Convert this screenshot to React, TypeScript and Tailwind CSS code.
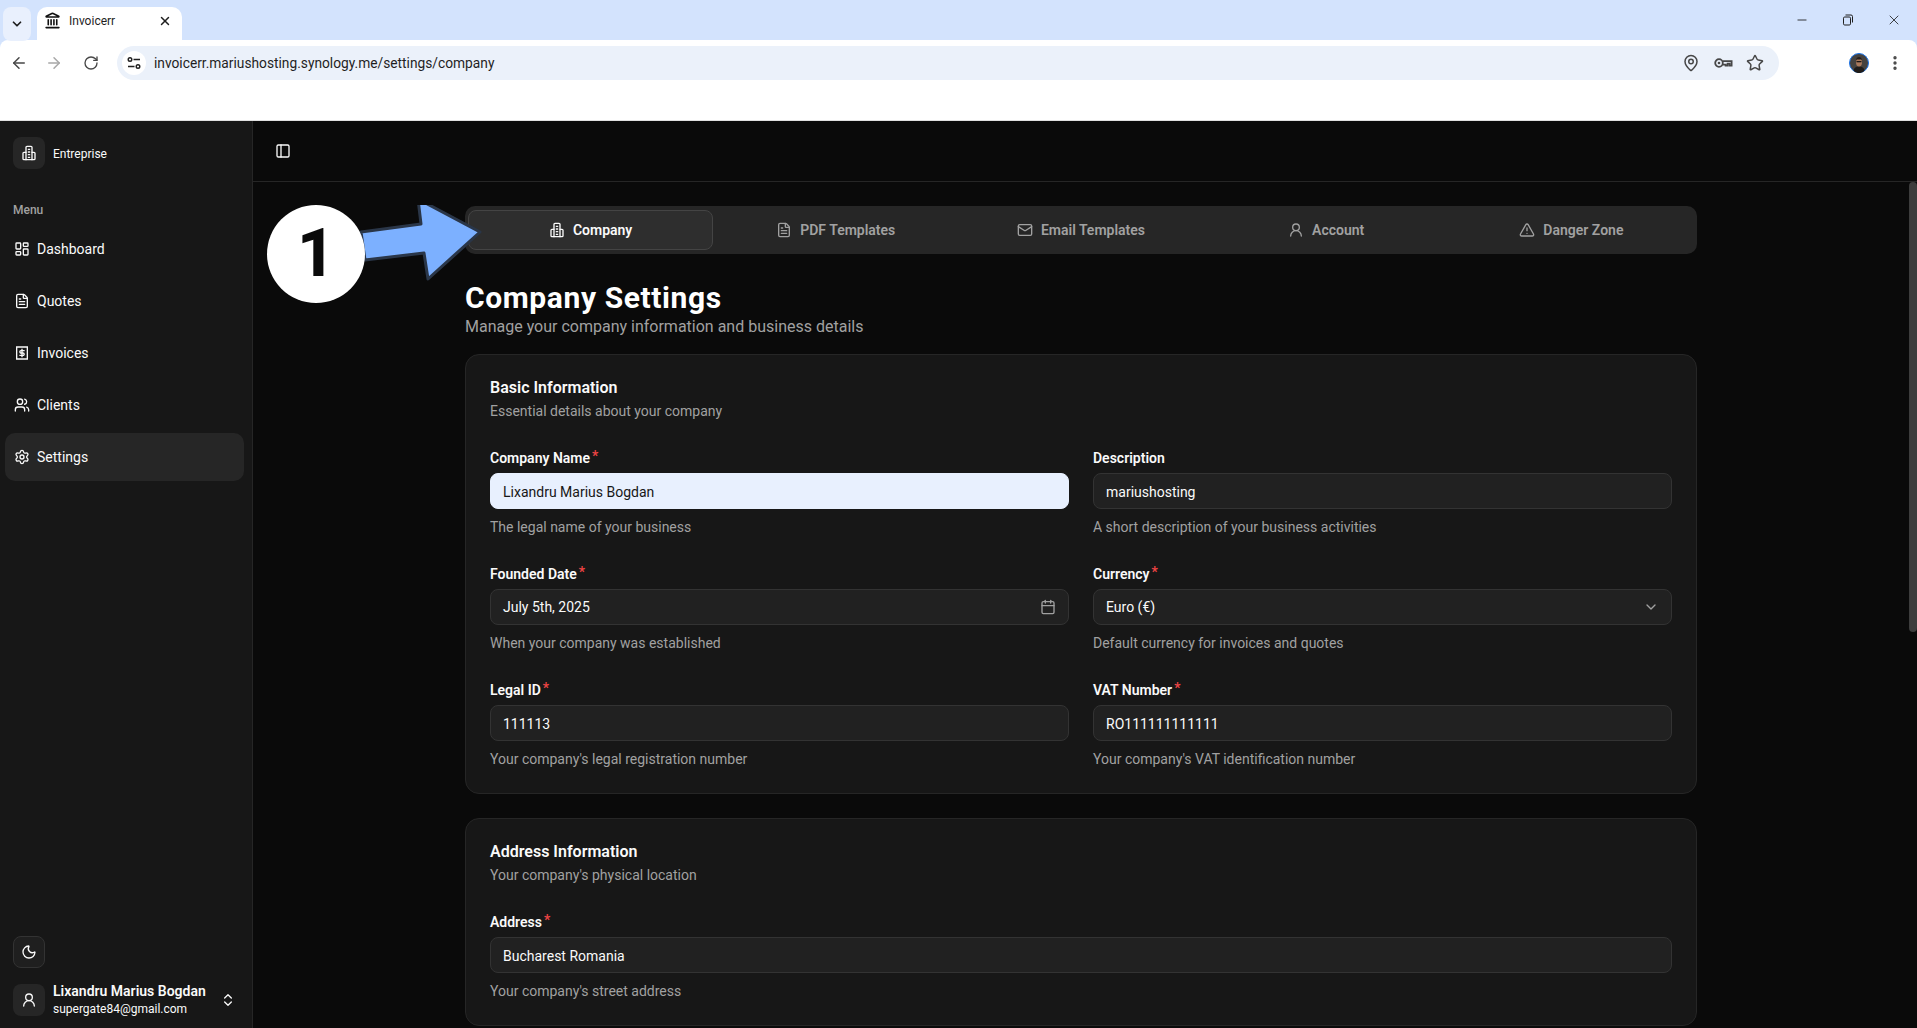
import { ArrowLeft, ArrowRight, Calendar, ChevronDown, ChevronsUpDown, FileText, Landmark, LayoutDashboard, Mail, MapPin, Minus, Moon, MoreVertical, PanelLeft, RotateCw, Settings, Star, TriangleAlert, UserRound, Users, X } from 'lucide-react'

function BuildingIcon({ size = 16 }: { size?: number }) {
  return (
    <svg width={size} height={size} viewBox="0 0 24 24" fill="none" stroke="currentColor" strokeWidth="2" strokeLinecap="round" strokeLinejoin="round">
      <path d="M7.500 22V3.500A1.500 1.500 0 0 1 9 2h6a1.500 1.500 0 0 1 1.500 1.500V22" />
      <path d="M7.500 11H4.500A1.500 1.500 0 0 0 3 12.500V20.500A1.500 1.500 0 0 0 4.500 22h15a1.500 1.500 0 0 0 1.500-1.500V12.500A1.500 1.500 0 0 0 19.500 11h-3" />
      <path d="M11 6.500h2M11 10.500h2M11 14.500h2M11 18.500h2" />
    </svg>
  )
}

function InvoiceIcon({ size = 16 }: { size?: number }) {
  return (
    <svg width={size} height={size} viewBox="0 0 24 24" fill="none" stroke="currentColor" strokeWidth="2" strokeLinecap="square">
      <rect x="4" y="3" width="16" height="18" strokeDasharray="2 1" />
      <path d="M15 8.500h-4.500a1.750 1.750 0 0 0 0 3.500h3a1.750 1.750 0 0 1 0 3.500H9M12 6.500v11" />
    </svg>
  )
}

function TuneIcon() {
  return (
    <svg width="16" height="16" viewBox="0 0 16 16" fill="none" stroke="#1f1f1f" strokeWidth="1.400">
      <circle cx="4" cy="4.500" r="1.800" />
      <path d="M7.500 4.500H14M2 11.500h6.500" />
      <circle cx="12" cy="11.500" r="1.800" />
    </svg>
  )
}

function KeyIcon() {
  return (
    <svg width="20" height="20" viewBox="0 0 20 20" fill="none" stroke="#474747" strokeWidth="1.800">
      <circle cx="6" cy="10" r="3.800" />
      <circle cx="6" cy="10" r="1.300" fill="#474747" stroke="none" />
      <path d="M9.800 8.200H18.600V12.600H16.600V10.600H14.600V12.600H12.600V11.600H9.800" />
    </svg>
  )
}

function RestoreIcon() {
  return (
    <svg width="12" height="12" viewBox="0 0 12 12" fill="none" stroke="#1f1f1f" strokeWidth="1">
      <rect x="1.500" y="3" width="7" height="8" rx="1.200" />
      <path d="M3.500 1h5.500a1.500 1.500 0 0 1 1.500 1.500v6" />
    </svg>
  )
}

function Avatar() {
  return (
    <svg width="20" height="20" viewBox="0 0 20 20">
      <circle cx="10" cy="10" r="9.500" fill="#45423f" stroke="#1a73e8" strokeWidth="1" />
      <path d="M4.500 18c.5-3.500 2.500-4.500 5.500-4.500s5 1 5.500 4.500a9 9 0 0 1-11 0z" fill="#1f1c1a" />
      <ellipse cx="10" cy="9" rx="3" ry="4.500" fill="#a9795c" />
      <path d="M7 7.500c0-2.500 1.500-3.500 3-3.500s3 1 3 3.500l-1-1h-4z" fill="#221d1a" />
      <rect x="7.500" y="8" width="5" height="1.300" fill="#1a1614" />
    </svg>
  )
}

function Browser() {
  return (
    <div className="bg-[#d3e3fd] shrink-0">
      <div className="h-10 flex items-start pl-[3px]">
        <div className="mt-[7px] w-7 h-[34px] rounded-lg bg-[#e9f0fd] flex items-center justify-center">
          <ChevronDown size={14} strokeWidth={3} className="text-[#1f1f1f]" />
        </div>
        <div className="ml-[6px] mt-[7px] w-[145px] h-[33px] rounded-t-[10px] bg-white flex items-start pt-[6px] pl-[7px] pr-[10px] text-[#1f1f1f]">
          <Landmark size={17} strokeWidth={2.25} className="mt-[-1px] text-[#111111]" />
          <span className="ml-[8px] text-xs leading-[16px]">Invoicerr</span>
          <X size={14} strokeWidth={2.5} className="ml-auto mt-px text-[#1f1f1f]" />
        </div>
        <div className="ml-auto mt-[12px] flex items-center text-[#1f1f1f]">
          <div className="w-[46px] flex justify-center"><Minus size={14} strokeWidth={1.5} /></div>
          <div className="w-[46px] flex justify-center"><RestoreIcon /></div>
          <div className="w-[46px] flex justify-center"><X size={16} strokeWidth={1.25} /></div>
        </div>
      </div>
      <div className="h-[81px] bg-white rounded-t-lg border-b border-[#e0e0e0] pt-[6px]">
        <div className="h-[34px] flex items-center">
          <div className="w-[117px] flex items-center text-[#474747] pl-[10px] gap-[17px] h-[34px]">
            <ArrowLeft size={18} />
            <ArrowRight size={18} className="text-[#a8a8a8]" />
            <RotateCw size={16} className="ml-[3px]" />
          </div>
          <div className="w-[1662px] h-[34px] rounded-full bg-[#ebf1fa] flex items-center pl-[5px] pr-[15px]">
            <div className="w-6 h-6 rounded-full bg-white flex items-center justify-center"><TuneIcon /></div>
            <span className="ml-[8px] text-[#1f1f1f] text-[13.750px]">invoicerr.mariushosting.synology.me/settings/company</span>
            <div className="ml-auto flex items-center gap-[13px] text-[#474747]">
              <MapPin size={18} />
              <KeyIcon />
              <Star size={18} />
            </div>
          </div>
          <div className="ml-[70px]"><Avatar /></div>
          <MoreVertical size={18} strokeWidth={2.5} className="ml-[17px] text-[#474747]" />
        </div>
      </div>
    </div>
  )
}

const navItems = [
  { label: 'Dashboard', icon: <LayoutDashboard size={16} /> },
  { label: 'Quotes', icon: <FileText size={16} /> },
  { label: 'Invoices', icon: <InvoiceIcon /> },
  { label: 'Clients', icon: <Users size={16} /> },
  { label: 'Settings', icon: <Settings size={16} />, active: true },
]

function Sidebar() {
  return (
    <aside className="w-[253px] shrink-0 bg-[#171717] border-r border-[#262626] flex flex-col text-[#fafafa]">
      <div className="pt-4 px-[13px] flex items-center gap-2">
        <div className="w-8 h-8 rounded-lg bg-[#262626] flex items-center justify-center"><BuildingIcon /></div>
        <span className="pt-px text-xs">Entreprise</span>
      </div>
      <div className="mt-[33px] px-[13px] text-xs font-medium text-[#a1a1a1] leading-4">Menu</div>
      <nav className="mt-[7px] pl-[5px] pr-2 flex flex-col gap-1">
        {navItems.map(item => (
          <div key={item.label} className={`h-12 pl-[9px] rounded-[10px] flex items-center gap-[7px] text-sm ${item.active ? 'bg-[#262626]' : ''}`}>
            {item.icon}
            <span>{item.label}</span>
          </div>
        ))}
      </nav>
      <div className="mt-auto px-[13px] pb-[10px]">
        <div className="w-8 h-8 rounded-lg border border-[#333333] bg-[#1f1f1f] flex items-center justify-center"><Moon size={16} /></div>
        <div className="mt-[14px] h-9 flex items-center gap-2">
          <div className="w-8 h-8 rounded-lg bg-[#262626] flex items-center justify-center"><UserRound size={16} /></div>
          <div className="flex flex-col">
            <span className="text-sm font-semibold leading-[18px] whitespace-nowrap">Lixandru Marius Bogdan</span>
            <span className="text-xs leading-[18px] whitespace-nowrap">supergate84@gmail.com</span>
          </div>
          <ChevronsUpDown size={16} className="ml-auto mr-[3px]" />
        </div>
      </div>
    </aside>
  )
}

const tabs = [
  { label: 'Company', icon: <BuildingIcon />, active: true },
  { label: 'PDF Templates', icon: <FileText size={16} /> },
  { label: 'Email Templates', icon: <Mail size={16} /> },
  { label: 'Account', icon: <UserRound size={16} /> },
  { label: 'Danger Zone', icon: <TriangleAlert size={16} /> },
]

function Field({ label, value, help, required, autofill, right }: { label: string; value: string; help: string; required?: boolean; autofill?: boolean; right?: React.ReactNode }) {
  return (
    <div>
      <div className="h-[14px] flex items-center text-sm font-semibold leading-none text-[#fafafa]">
        {label}
        {required && <span className="ml-[2px] -mt-1 text-[#ef4444]">*</span>}
      </div>
      <div className={`mt-2 h-9 rounded-lg px-3 flex items-center text-sm border ${autofill ? 'bg-[#e8f0fe] border-[#e8f0fe] text-[#171717]' : 'bg-[#212121] border-[#333333] text-[#fafafa]'}`}>
        <span className={right ? '' : 'pt-px'}>{value}</span>
        {right && <span className="ml-auto text-[#a1a1a1]">{right}</span>}
      </div>
      <div className="mt-2 text-sm leading-5 text-[#a1a1a1]">{help}</div>
    </div>
  )
}

function Main() {
  return (
    <main className="flex-1 min-w-0 bg-[#0a0a0a] flex flex-col">
      <div className="h-[61px] shrink-0 border-b border-[#262626] flex items-center text-[#fafafa]">
        <PanelLeft size={16} className="ml-[22px]" />
      </div>
      <div className="flex-1 min-h-0 flex overflow-hidden">
        <div className="flex-1 min-w-0 pt-6 pl-[212px] pr-[212px]">
          <div className="h-12 rounded-[10px] bg-[#262626] py-1 px-[3px] grid grid-cols-5">
            {tabs.map(t => (
              <div key={t.label} className={`rounded-lg flex items-center justify-center gap-2 text-sm font-semibold border ${t.active ? 'bg-[#2e2e2e] border-[#444444] text-[#fafafa]' : 'border-transparent text-[#a1a1a1]'}`}>
                {t.icon}
                <span>{t.label}</span>
              </div>
            ))}
          </div>
          <h1 className="mt-[26px] text-3xl font-bold leading-9 tracking-[0.6px] text-white">Company Settings</h1>
          <p className="-mt-[1px] text-base leading-6 text-[#a1a1a1]">Manage your company information and business details</p>
          <section className="mt-[15px] rounded-[14px] border border-[#262626] bg-[#171717] p-6">
            <h2 className="text-base font-semibold leading-[18px] text-[#fafafa]">Basic Information</h2>
            <p className="mt-1 text-sm leading-5 text-[#a1a1a1]">Essential details about your company</p>
            <div className="mt-[30px] grid grid-cols-2 gap-x-6 gap-y-[30px]">
              <Field label="Company Name" required value="Lixandru Marius Bogdan" help="The legal name of your business" autofill />
              <Field label="Description" value="mariushosting" help="A short description of your business activities" />
              <Field label="Founded Date" required value="July 5th, 2025" help="When your company was established" right={<Calendar size={16} />} />
              <Field label="Currency" required value="Euro (€)" help="Default currency for invoices and quotes" right={<ChevronDown size={16} />} />
              <Field label="Legal ID" required value="111113" help="Your company's legal registration number" />
              <Field label="VAT Number" required value="RO111111111111" help="Your company's VAT identification number" />
            </div>
          </section>
          <section className="mt-6 rounded-[14px] border border-[#262626] bg-[#171717] p-6">
            <h2 className="text-base font-semibold leading-[18px] text-[#fafafa]">Address Information</h2>
            <p className="mt-1 text-sm leading-5 text-[#a1a1a1]">Your company's physical location</p>
            <div className="mt-[30px]">
              <Field label="Address" required value="Bucharest Romania" help="Your company's street address" />
            </div>
          </section>
        </div>
        <div className="w-2 shrink-0 bg-[#0a0a0a]">
          <div className="h-[450px] bg-[#3d3d3d] rounded-sm" />
        </div>
      </div>
    </main>
  )
}

function Callout() {
  return (
    <div className="absolute left-[267px] top-[205px] w-[215px] h-[98px]">
      <svg className="absolute left-0 top-0" width="215" height="98" viewBox="267 205 215 98">
        <polygon points="361,232 421,224 418,199 480,232 428,279 424,253 365,260" fill="#7cb0ff" stroke="#2a3648" strokeWidth="3" strokeLinejoin="round" />
      </svg>
      <div className="absolute left-0 top-0 w-[98px] h-[98px] rounded-full bg-white flex items-center justify-center text-[66px] font-extrabold leading-none text-[#0a0a0a]">1</div>
    </div>
  )
}

export default function App() {
  return (
    <div className="relative h-screen w-full overflow-hidden flex flex-col bg-[#0a0a0a] font-['Roboto','Liberation_Sans',sans-serif]">
      <Browser />
      <div className="flex-1 min-h-0 flex">
        <Sidebar />
        <Main />
      </div>
      <Callout />
    </div>
  )
}
